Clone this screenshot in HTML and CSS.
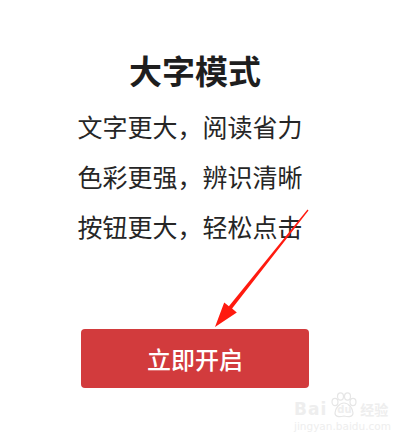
FILE: index.html
```html
<!DOCTYPE html>
<html lang="zh">
<head>
<meta charset="utf-8">
<link rel="stylesheet" href="styles.css">
</head>
<body>
<main class="page">
  <h1 class="title">大字模式</h1>
  <ul class="features">
    <li>文字更大，阅读省力</li>
    <li>色彩更强，辨识清晰</li>
    <li>按钮更大，轻松点击</li>
  </ul>
  <button class="cta">立即开启</button>
</main>
<svg class="arrow" width="410" height="444" viewBox="0 0 410 444">
  <polygon fill="#ff1a0f" points="308.5,210.4 307.5,209.6 228.9,306.2 224.2,302.4 215,327 236.8,312.4 232.1,308.6"/>
</svg>
<div class="watermark">
  <div class="wm-row">
    <span class="wm-bai">Bai</span>
    <span class="wm-paw">
      <svg width="28" height="26" viewBox="0 0 28 26">
        <g fill="none" stroke="#e6e6e6" stroke-width="1.2">
          <ellipse cx="5" cy="10" rx="3" ry="3.6"/>
          <ellipse cx="10.5" cy="4.5" rx="3" ry="3.6"/>
          <ellipse cx="17.5" cy="4.5" rx="3" ry="3.6"/>
          <ellipse cx="23" cy="10" rx="3" ry="3.6"/>
          <path d="M14 11 C9 11 5 17 5 21 C5 25 9 25 14 24 C19 25 23 25 23 21 C23 17 19 11 14 11 Z"/>
        </g>
      </svg>
      <span class="wm-du">du</span>
    </span>
    <span class="wm-jy">经验</span>
  </div>
  <div class="wm-url">jingyan.baidu.com</div>
</div>
</body>
</html>
```
FILE: styles.css
```css
html, body {
  margin: 0;
  padding: 0;
  background: #ffffff;
}
body {
  width: 410px;
  height: 444px;
  overflow: hidden;
  position: relative;
  font-family: "Noto Sans CJK SC", "Noto Sans", sans-serif;
  color: #1c1c1c;
}
.page {
  display: flex;
  flex-direction: column;
  align-items: center;
  padding: 50px 20px 0 0;
}
.title {
  margin: 0;
  font-size: 33px;
  line-height: 40px;
  font-weight: 700;
  color: #1e1e1e;
}
.features {
  list-style: none;
  margin: 11px 10px 0 0;
  padding: 0;
  display: flex;
  flex-direction: column;
  align-items: center;
}
.features li {
  font-size: 25px;
  line-height: 50px;
  font-weight: 400;
  color: #262626;
}
.cta {
  margin-top: 78px;
  width: 228px;
  height: 59px;
  border: none;
  border-radius: 4px;
  background: #d23b3d;
  color: #ffffff;
  font-family: "Noto Sans CJK SC", "Noto Sans", sans-serif;
  font-size: 24px;
  font-weight: 500;
  padding: 0;
}
.arrow {
  position: absolute;
  left: 0;
  top: 0;
  pointer-events: none;
}
.watermark {
  position: absolute;
  left: 294px;
  top: 392px;
  display: flex;
  flex-direction: column;
  font-family: "DejaVu Sans", sans-serif;
  color: #eeeeee;
}
.wm-row {
  display: flex;
  align-items: flex-end;
  height: 26px;
}
.wm-bai {
  font-size: 17px;
  font-weight: 700;
  line-height: 18px;
  letter-spacing: 1px;
}
.wm-paw {
  position: relative;
  width: 28px;
  height: 26px;
  margin: 0 2px 0 3px;
}
.wm-du {
  position: absolute;
  left: 7px;
  top: 12px;
  font-size: 10px;
  font-weight: 700;
  line-height: 12px;
}
.wm-jy {
  font-family: "Noto Sans CJK SC", sans-serif;
  font-size: 14px;
  line-height: 18px;
  font-weight: 700;
}
.wm-url {
  font-size: 10.5px;
  line-height: 14px;
  margin-top: 1px;
}
```
